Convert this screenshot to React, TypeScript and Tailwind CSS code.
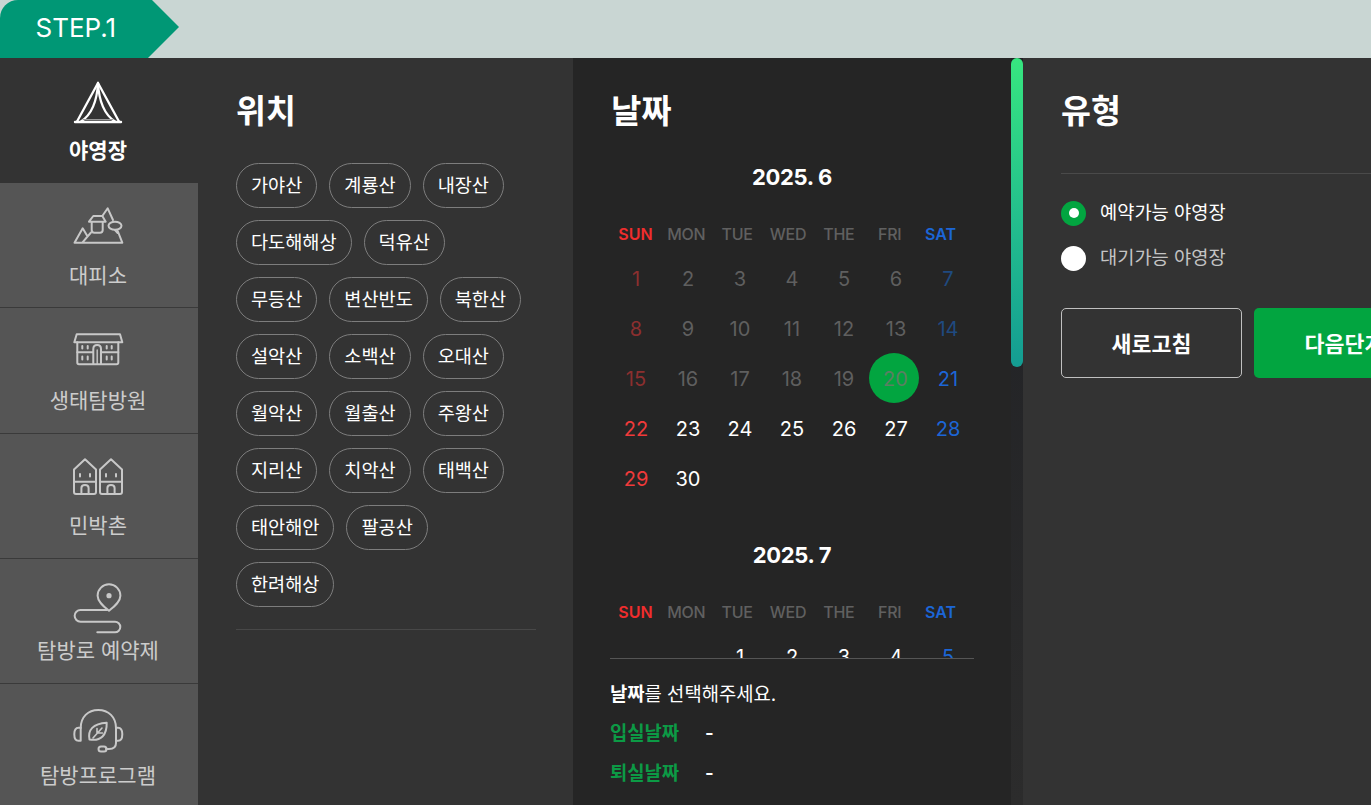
import React from "react";

const FONT = "[font-family:Inter,'Noto_Sans_CJK_KR',sans-serif]";

function Tent() {
  return (
    <svg viewBox="0 0 50 50" className="h-[50px] w-[50px] overflow-visible" fill="none" stroke="#fff" strokeWidth="2.3" strokeLinejoin="round" strokeLinecap="round">
      <path d="M25 3 L4 41.5 M25 3 L46 41.5" />
      <path d="M25 3 C24 22 18 35 8 41.5 M25 3 C26 22 32 35 42 41.5" />
      <path d="M2 42 H48" strokeWidth="2.4" />
      <path d="M10 39.5 H40" strokeWidth="1" stroke="#9a9a9a" />
    </svg>
  );
}
function Mountain() {
  return (
    <svg viewBox="0 0 50 50" className="h-[50px] w-[50px] overflow-visible" fill="none" stroke="#c8c8c8" strokeWidth="2" strokeLinejoin="round" strokeLinecap="round">
      <path d="M1.5 37.7 H49.3 L44.7 26 M1.5 37.7 L9.7 23.3 L13.7 30 M9.3 37.7 L18 27.5" />
      <path d="M29.3 11 L34.7 3.3 L40 15" />
      <path d="M16 16.7 L20.3 11 H29.3 L32.7 16.7 Z" />
      <path d="M18.7 17 V25 Q18.7 27.7 21.3 27.7 H27 Q29.7 27.7 29.7 25 V17" />
      <ellipse cx="42" cy="20.7" rx="6.5" ry="4" />
      <path d="M42 25 L44.7 28" />
    </svg>
  );
}
function Hall() {
  return (
    <svg viewBox="0 0 50 50" className="h-[50px] w-[50px] overflow-visible" fill="none" stroke="#c8c8c8" strokeWidth="2" strokeLinejoin="round" strokeLinecap="round">
      <path d="M3.7 4.3 H47 L49.3 12.3 H1.3 Z" />
      <path d="M4.3 12.3 V32.5 Q4.3 34.3 6 34.3 H43.5 Q45.3 34.3 45.3 32.5 V12.3" />
      <path d="M4.3 22.3 H20 M28.5 22.3 H45.3" />
      <path d="M20.3 34 V19 Q20.3 15 24.2 15 Q28 15 28 19 V34" />
      <path d="M24.2 20 V34" strokeWidth="1.4" />
      <path d="M9.3 16 V18.5 M14.7 16 V18.5 M33.7 16 V18.5 M38.7 16 V18.5 M9.3 26.5 V29.5 M14.7 26.5 V29.5 M33.7 26.5 V29.5 M38.7 26.5 V29.5" />
    </svg>
  );
}
function Houses() {
  const house = (d: number) =>
    `M${1 + d} 14.5 L${12 + d} 4.3 L${23 + d} 14.5 V37 Q${23 + d} 39 ${21 + d} 39 H${3 + d} Q${1 + d} 39 ${1 + d} 37 Z M${1 + d} 26.7 H${23 + d} M${8.4 + d} 39 V33 Q${8.4 + d} 30 ${12 + d} 30 Q${15.6 + d} 30 ${15.6 + d} 33 V39 M${7 + d} 19 V21.5 M${17 + d} 19 V21.5`;
  return (
    <svg viewBox="0 0 50 50" className="h-[50px] w-[50px] overflow-visible" fill="none" stroke="#c8c8c8" strokeWidth="2" strokeLinejoin="round" strokeLinecap="round">
      <path d={house(0)} />
      <path d={house(26)} />
    </svg>
  );
}
function Route() {
  return (
    <svg viewBox="0 0 50 50" className="h-[50px] w-[50px] overflow-visible" fill="none" stroke="#c8c8c8" strokeWidth="2" strokeLinejoin="round" strokeLinecap="round">
      <path d="M36 30.7 C30 26 24.6 21.5 24.6 15.7 A11.4 11.4 0 0 1 47.4 15.7 C47.4 21.5 42 26 36 30.7 Z" />
      <circle cx="36" cy="15.7" r="2.6" fill="#c8c8c8" stroke="none" />
      <path d="M34 30 H7.5 A5.8 5.8 0 0 0 7.5 41.7 H42 A5.3 5.3 0 0 1 42 52.3 H24.3" />
    </svg>
  );
}
function Headset() {
  return (
    <svg viewBox="0 0 50 50" className="h-[50px] w-[50px] overflow-visible" fill="none" stroke="#c8c8c8" strokeWidth="2" strokeLinejoin="round" strokeLinecap="round">
      <path d="M7.7 23 C7.7 12 15 5 25.3 5 C35.5 5 43 12 43 23" />
      <path d="M7.7 22.7 H5.5 Q1.3 22.7 1.3 29.2 Q1.3 35.7 5.5 35.7 H7.7 Z" />
      <path d="M43 22.7 H45 Q49.3 22.7 49.3 29.2 Q49.3 35.7 45 35.7 H43 Z" />
      <path d="M43 36 V38 Q43 44 36 44 H33" />
      <rect x="25.5" y="41.5" width="8" height="5" rx="2.5" />
      <path d="M16.5 34.5 C14.5 25 20 18.5 33.7 17.7 C34 30 28 36.5 16.5 34.5 Z" />
      <path d="M20 33 L29 23 M24 28.5 V23.5 M24.5 28 H29.5" strokeWidth="1.6" />
    </svg>
  );
}

const NAV = [
  { label: "야영장", Icon: Tent, active: true, h: "h-[125px] pt-[22px]" },
  { label: "대피소", Icon: Mountain, h: "h-[125px] pt-[22px]" },
  { label: "생태탐방원", Icon: Hall, h: "h-[126px] pt-[22px]" },
  { label: "민박촌", Icon: Houses, h: "h-[125px] pt-[21px]" },
  { label: "탐방로 예약제", Icon: Route, h: "h-[125px] pt-[21px]" },
  { label: "탐방프로그램", Icon: Headset, h: "h-[125px] pt-[21px]" },
];

const PLACES = [
  "가야산", "계룡산", "내장산", "다도해해상", "덕유산", "무등산", "변산반도", "북한산", "설악산", "소백산", "오대산",
  "월악산", "월출산", "주왕산", "지리산", "치악산", "태백산", "태안해안", "팔공산", "한려해상",
];

const WEEK = ["SUN", "MON", "TUE", "WED", "THE", "FRI", "SAT"];

function dayColor(col: number, past: boolean) {
  if (col === 0) return past ? "text-[#8c2f2f]" : "text-[#f03a3a]";
  if (col === 6) return past ? "text-[#1f4a80]" : "text-[#1c66d6]";
  return past ? "text-[#5f5f5f]" : "text-white";
}

function Month({ title, offset, days, pastUntil, selected }: { title: string; offset: number; days: number; pastUntil: number; selected?: number }) {
  const cells: (number | null)[] = [];
  for (let i = 0; i < offset; i++) cells.push(null);
  for (let d = 1; d <= days; d++) cells.push(d);
  return (
    <div className="w-[364px]">
      <div className="h-[30px] text-center text-[22px] font-bold leading-[32px] tracking-[-0.3px] text-white">{title}</div>
      <div className="mt-[28px] grid h-[30px] w-[356px] grid-cols-7 items-center text-center text-[16px] font-medium">
        {WEEK.map((w, i) => (
          <div key={w} className={i === 0 ? "font-semibold text-[#f02d2d]" : i === 6 ? "font-semibold text-[#1c66d6]" : "tracking-[-0.3px] text-[#606060]"}>
            {w}
          </div>
        ))}
      </div>
      <div className="mt-[5px] grid grid-cols-7">
        {cells.map((d, i) => (
          <div key={i} className={`flex h-[50px] items-center justify-center text-[20px] ${d ? dayColor(i % 7, d < pastUntil) : ""}`}>
            {d === selected ? (
              <span className="flex h-[50px] w-[50px] -translate-x-[2px] -translate-y-[1px] items-center justify-center rounded-full bg-[#02a540] pl-[3px] pt-[2px] text-[#5b7f63]">{d}</span>
            ) : (
              d
            )}
          </div>
        ))}
      </div>
    </div>
  );
}

export default function App() {
  return (
    <div className={`flex h-screen w-screen flex-col overflow-hidden bg-[#333333] ${FONT}`}>
      <header className="h-[58px] shrink-0 bg-[#c9d6d3]">
        <div className="flex h-[58px] w-[179px] items-center rounded-tl-[18px] bg-[#009775] pb-[4px] pl-[35.5px] text-[26px] text-white [clip-path:polygon(0_0,152px_0,179px_27px,148px_58px,0_58px)]">
          STEP.1
        </div>
      </header>
      <main className="flex min-h-0 flex-1">
        <nav className="flex w-[198px] shrink-0 flex-col">
          {NAV.map(({ label, Icon, active, h }) => (
            <div
              key={label}
              className={`flex ${h} shrink-0 flex-col items-center pr-[2px] ${active ? "bg-[#333333] font-bold text-white" : "border-b border-[#3a3a3a] bg-[#555555] text-[#cccccc]"}`}
            >
              <Icon />
              <div className="mt-[5px] text-[21px] leading-[31px]">{label}</div>
            </div>
          ))}
        </nav>

        <section className="w-[375px] shrink-0 bg-[#333333] pl-[38px] pr-[37px] pt-[32px]">
          <h2 className="h-[40px] text-[32.5px] font-bold leading-[43px] text-white">위치</h2>
          <div className="mt-[33px] flex flex-wrap gap-x-[12px] gap-y-[12px] border-b border-[#484848] pb-[22px]">
            {PLACES.map((p) => (
              <span key={p} className="flex h-[45px] items-center rounded-full border border-[#7d7d7d] px-[14px] text-[18.6px] text-white">
                {p}
              </span>
            ))}
          </div>
        </section>

        <section className="flex w-[450px] shrink-0 bg-[#252525]">
          <div className="flex w-[438px] flex-col pl-[37px] pt-[32px]">
            <h2 className="h-[40px] pl-[1px] text-[33px] font-bold leading-[43px] text-white">날짜</h2>
            <div className="mt-[31px] min-h-0 flex-1 overflow-hidden">
              <Month title="2025. 6" offset={0} days={30} pastUntil={21} selected={20} />
              <div className="mt-[35px]">
                <Month title="2025. 7" offset={2} days={31} pastUntil={0} />
              </div>
            </div>
            <div className="h-[147px] w-[364px] shrink-0 border-t border-[#555555] pt-[21px] text-[18.8px] leading-[30px] text-white">
              <p>
                <b>날짜</b>를 선택해주세요.
              </p>
              <div className="mt-[9px] flex font-bold">
                <span className="w-[95px] text-[#0c9a45]">입실날짜</span>
                <span className="font-semibold">-</span>
              </div>
              <div className="mt-[10px] flex font-bold">
                <span className="w-[95px] text-[#0c9a45]">퇴실날짜</span>
                <span className="font-semibold">-</span>
              </div>
            </div>
          </div>
          <div className="w-[12px] shrink-0 bg-gradient-to-b from-[#1f2024] to-[#2c2c2c]">
            <div className="h-[309px] rounded-full bg-gradient-to-b from-[#37e67f] to-[#149c92]" />
          </div>
        </section>

        <section className="min-w-0 flex-1 bg-[#333333] pl-[38px] pt-[32px]">
          <h2 className="h-[40px] text-[32.5px] font-bold leading-[43px] text-white">유형</h2>
          <div className="mt-[43px] flex items-center gap-[14px] border-t border-[#4a4a4a] pt-[26px] text-[18.7px] leading-[26px] text-white">
            <span className="flex h-[25px] w-[25px] items-center justify-center rounded-full bg-[#02a540]">
              <span className="h-[10px] w-[10px] rounded-full bg-white" />
            </span>
            예약가능 야영장
          </div>
          <div className="mt-[19px] flex items-center gap-[14px] text-[18.7px] leading-[26px] text-[#c4c4c4]">
            <span className="h-[25px] w-[25px] rounded-full bg-white" />
            대기가능 야영장
          </div>
          <div className="mt-[37px] flex w-[400px] gap-[12px]">
            <button className="h-[70px] w-[181px] rounded-[5px] border border-[#c0c0c0] pt-[2px] text-[21.7px] font-bold text-white">새로고침</button>
            <button className="h-[70px] w-[181px] rounded-[5px] bg-[#02a540] pt-[2px] text-[21.7px] font-bold text-white">다음단계</button>
          </div>
        </section>
      </main>
    </div>
  );
}
